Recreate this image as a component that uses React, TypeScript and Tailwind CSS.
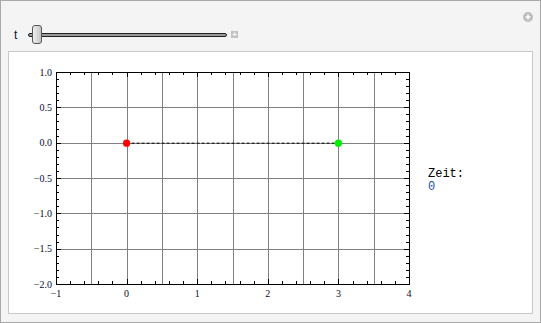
import React from 'react';

// plot frame in page coordinates
const X0 = 56;
const X1 = 409;
const Y0 = 72;
const Y1 = 284;
const sx = (v: number) => X0 + ((v + 1) / 5) * (X1 - X0);
const sy = (v: number) => Y0 + ((1 - v) / 3) * (Y1 - Y0);

const range = (a: number, b: number, step: number) => {
  const out: number[] = [];
  for (let v = a; v <= b + 1e-9; v += step) out.push(Math.round(v * 100) / 100);
  return out;
};

const fmtY = (v: number) => (v < 0 ? '\u2212' : '') + Math.abs(v).toFixed(1);
const fmtX = (v: number) => (v < 0 ? '\u2212' : '') + Math.abs(v).toString();

function Plot() {
  const gridX = range(-0.5, 3.5, 0.5);
  const gridY = range(-1.5, 0.5, 0.5);
  const minorX = range(-1, 4, 0.2);
  const minorY = range(-2, 1, 0.1);
  const majorX = range(-1, 4, 1);
  const majorY = range(-2, 1, 0.5);

  return (
    <svg width={411} height={261} className="shrink-0">
      <g transform="translate(-9,-52)" shapeRendering="crispEdges">
        {gridX.map((v) => (
          <line key={'gx' + v} x1={Math.round(sx(v)) + 0.5} x2={Math.round(sx(v)) + 0.5} y1={Y0} y2={Y1} stroke="#808080" strokeWidth={1} />
        ))}
        {gridY.map((v) => (
          <line key={'gy' + v} y1={Math.round(sy(v)) + 0.5} y2={Math.round(sy(v)) + 0.5} x1={X0} x2={X1} stroke="#808080" strokeWidth={1} />
        ))}

        {/* x ticks, bottom and top */}
        {minorX.map((v) => {
          const x = Math.round(sx(v)) + 0.5;
          const major = majorX.some((m) => Math.abs(m - v) < 1e-6);
          const len = major ? 5 : 3;
          return (
            <g key={'tx' + v}>
              <line x1={x} x2={x} y1={Y1} y2={Y1 - len} stroke="#000" />
              <line x1={x} x2={x} y1={Y0} y2={Y0 + len} stroke="#000" />
            </g>
          );
        })}

        {/* y ticks, left and right */}
        {minorY.map((v) => {
          const y = Math.round(sy(v)) + 0.5;
          const major = majorY.some((m) => Math.abs(m - v) < 1e-6);
          const len = major ? 5 : 3;
          return (
            <g key={'ty' + v}>
              <line x1={X0} x2={X0 + len} y1={y} y2={y} stroke="#000" />
              <line x1={X1} x2={X1 - len} y1={y} y2={y} stroke="#000" />
            </g>
          );
        })}

        <rect x={X0 + 0.5} y={Y0 + 0.5} width={X1 - X0} height={Y1 - Y0} fill="none" stroke="#000" strokeWidth={1} />
      </g>

      <g transform="translate(-9,-52)">
        <line x1={sx(0)} x2={sx(3)} y1={sy(0) + 0.5} y2={sy(0) + 0.5} stroke="#000" strokeWidth={1} strokeDasharray="3 2" />
        <circle cx={sx(0)} cy={sy(0) + 0.5} r={3.6} fill="#ff0000" />
        <circle cx={sx(3)} cy={sy(0) + 0.5} r={3.6} fill="#00ee00" />

        {majorY.map((v) => (
          <text key={'ly' + v} x={52} y={sy(v) + 3.5} textAnchor="end" fontSize={10} fill="#0a0a2a" fontFamily="'Liberation Serif', serif">
            {fmtY(v)}
          </text>
        ))}
        {majorX.map((v) => (
          <text key={'lx' + v} x={sx(v)} y={297} textAnchor="middle" fontSize={10} fill="#0a0a2a" fontFamily="'Liberation Serif', serif">
            {fmtX(v)}
          </text>
        ))}
      </g>
    </svg>
  );
}

export default function App() {
  return (
    <div className="w-[541px] h-[323px] bg-[#f4f4f4] border border-[#a8a8a8] flex flex-col">
      {/* controls */}
      <div className="relative h-[50px] pt-[24px] pl-[13px] flex items-start">
        <div className="flex items-center h-[19px]">
          <span className="text-[12px] leading-none text-[#111133] font-['Liberation_Sans',sans-serif] w-[14px]">t</span>
          <div className="relative w-[199px] h-[4px] rounded-full bg-[#9a9a9a] border border-[#222]">
            <div className="absolute left-[3px] top-[-9px] w-[10px] h-[19px] rounded-[3px] border border-[#555] bg-gradient-to-r from-[#f0f0f0] to-[#c4c4c4]" />
          </div>
          <div className="ml-[4px] w-[7px] h-[7px] bg-[#c2c2c2] flex items-center justify-center text-white text-[8px] leading-none font-bold font-['Liberation_Sans',sans-serif]">
            +
          </div>
        </div>
        <div className="absolute right-[7px] top-[11px] w-[10px] h-[10px] rounded-full bg-[#bdbdbd] flex items-center justify-center">
          <svg width={6} height={6} viewBox="0 0 6 6">
            <path d="M3 0.5v5M0.5 3h5" stroke="#fff" strokeWidth={1.6} />
          </svg>
        </div>
      </div>

      {/* output panel */}
      <div className="mx-[7px] h-[263px] bg-white border border-[#c8c8c8] flex items-center">
        <Plot />
        <div className="pl-[8px] font-['Liberation_Mono',monospace] text-[12px] leading-[13px] mt-[-4px]">
          <div className="text-black">Zeit:</div>
          <div className="text-[#1a4fb0]">0</div>
        </div>
      </div>
    </div>
  );
}
